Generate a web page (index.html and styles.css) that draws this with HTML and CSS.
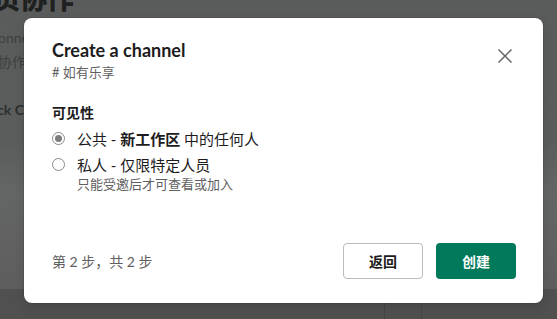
FILE: index.html
```html
<!DOCTYPE html>
<html lang="zh-CN">
<head>
  <meta charset="UTF-8">
  <meta name="viewport" content="width=device-width, initial-scale=1.0">
  <title>Create a channel</title>
  <link rel="stylesheet" href="styles.css">
</head>
<body>

  <div class="backdrop">
    <div class="bg-page">
      <h1 class="bg-title">页协作</h1>
      <p class="bg-text">onne</p>
      <p class="bg-text">协作。</p>
      <p class="bg-link">ck Co</p>
    </div>
    <div class="bg-bottom">
      <div class="bg-rule"></div>
    </div>
  </div>

  <div class="modal">
    <div class="modal-head">
      <div>
        <h2 class="modal-title">Create a channel</h2>
        <div class="modal-sub"># 如有乐享</div>
      </div>
      <button class="close-btn" aria-label="关闭">
        <svg width="16" height="16" viewBox="0 0 16 16">
          <path d="M1.5 1.5 L14.5 14.5 M14.5 1.5 L1.5 14.5" stroke="#5e5e5e" stroke-width="1.4" fill="none"/>
        </svg>
      </button>
    </div>

    <div class="modal-body">
      <div class="section-label">可见性</div>
      <label class="option">
        <span class="radio checked"></span>
        <span class="option-text">公共 - <b>新工作区</b> 中的任何人</span>
      </label>
      <label class="option">
        <span class="radio"></span>
        <span class="option-text">私人 - 仅限特定人员</span>
      </label>
      <div class="option-hint">只能受邀后才可查看或加入</div>
    </div>

    <div class="modal-foot">
      <span class="step">第 2 步，共 2 步</span>
      <div class="actions">
        <button class="btn btn-back">返回</button>
        <button class="btn btn-create">创建</button>
      </div>
    </div>
  </div>

</body>
</html>
```

FILE: styles.css
```css
body {
  margin: 0;
  width: 557px;
  height: 319px;
  overflow: hidden;
  position: relative;
  font-family: Lato, 'Noto Sans CJK SC', sans-serif;
  background-color: #5a5d5c;
}

.backdrop {
  height: 100%;
  display: flex;
  flex-direction: column;
  background: linear-gradient(180deg, #5a5c5b 0%, #5b5d5c 45%, #646565 60%, #5e5e5e 90%);
}

.bg-page {
  flex: 1;
  overflow: hidden;
}

.bg-title {
  margin: -18px 0 0 -7px;
  font-size: 27px;
  line-height: 32px;
  font-weight: 900;
  color: #1f2120;
  font-family: 'Noto Sans CJK SC', sans-serif;
}

.bg-text {
  margin: 0 0 0 -2px;
  font-size: 14px;
  line-height: 24px;
  color: #3e403f;
}

.bg-text:first-of-type {
  margin-top: 12px;
}

.bg-link {
  margin: 24px 0 0 -3px;
  font-size: 14px;
  line-height: 24px;
  font-weight: 700;
  color: #2c2e2d;
}

.bg-bottom {
  height: 30px;
  background: #505050;
}

.bg-rule {
  margin-left: 384px;
  width: 36px;
  height: 100%;
  border-left: 1px solid #444;
  border-right: 1px solid #474747;
}

.modal {
  position: absolute;
  left: 24px;
  top: 18px;
  width: 519px;
  height: 285px;
  box-sizing: border-box;
  background: #fff;
  border-radius: 8px;
  box-shadow: 0 0 0 1px rgba(0, 0, 0, 0.08), 0 4px 12px rgba(0, 0, 0, 0.12);
  padding: 20px 27px 24px 28px;
  display: flex;
  flex-direction: column;
  color: #1d1c1d;
}

.modal-head {
  display: flex;
  justify-content: space-between;
  align-items: flex-start;
}

.modal-title {
  margin: 0;
  font-size: 18px;
  line-height: 24px;
  font-weight: 700;
  color: #1d1c1d;
}

.modal-sub {
  font-size: 13px;
  line-height: 20px;
  color: #616061;
}

.close-btn {
  margin: 8px 1px 0 0;
  padding: 0;
  width: 20px;
  height: 20px;
  border: none;
  background: none;
  display: flex;
  align-items: center;
  justify-content: center;
}

.modal-body {
  margin-top: 21px;
  flex: 1;
}

.section-label {
  font-size: 14px;
  line-height: 20px;
  font-weight: 700;
  color: #1d1c1d;
  margin-bottom: 2px;
}

.option {
  display: flex;
  align-items: center;
  gap: 12px;
  height: 26px;
  font-size: 15px;
  color: #1d1c1d;
}

.option b {
  font-weight: 700;
}

.radio {
  width: 13px;
  height: 13px;
  border-radius: 50%;
  border: 1px solid #8a8a8a;
  box-sizing: border-box;
  display: flex;
  align-items: center;
  justify-content: center;
}

.radio.checked::after {
  content: '';
  width: 7px;
  height: 7px;
  border-radius: 50%;
  background: #7c7c7c;
}

.option-hint {
  margin-left: 25px;
  margin-top: -2px;
  font-size: 13px;
  line-height: 18px;
  color: #616061;
}

.modal-foot {
  display: flex;
  justify-content: space-between;
  align-items: center;
}

.step {
  font-size: 14px;
  color: #616061;
}

.actions {
  display: flex;
  gap: 13px;
}

.btn {
  width: 80px;
  height: 36px;
  border-radius: 4px;
  font-family: 'Noto Sans CJK SC', sans-serif;
  font-size: 14px;
  font-weight: 700;
  cursor: pointer;
}

.btn-back {
  background: #fff;
  border: 1px solid #bbbbbb;
  color: #1d1c1d;
}

.btn-create {
  background: #007a5a;
  border: none;
  color: #fff;
}
```
